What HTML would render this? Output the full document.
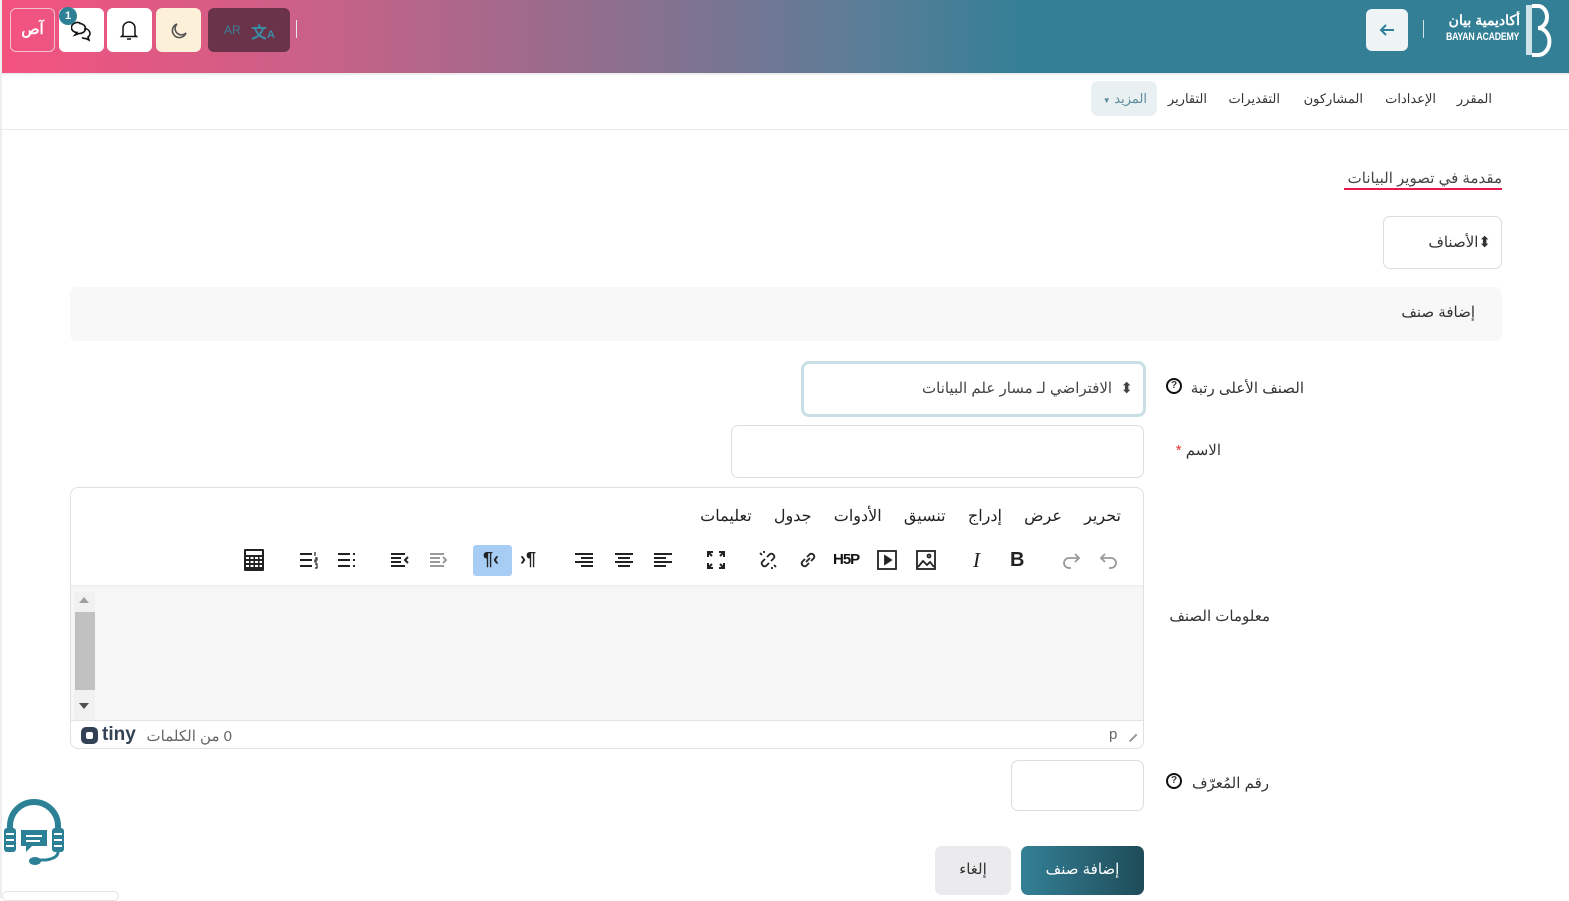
<!DOCTYPE html>
<html lang="ar"><head><meta charset="utf-8">
<style>
*{box-sizing:border-box;margin:0;padding:0}
body{width:1569px;height:898px;overflow:hidden;background:#fff;font-family:"Liberation Sans","Noto Sans CJK SC",sans-serif;color:#333;position:relative}
.a{position:absolute}
.t{position:absolute;white-space:nowrap;direction:rtl;font-size:14px;color:#333}
svg{display:block}
.ic{position:absolute;top:548px;width:24px;height:24px}
</style></head><body>
<div class="a" style="left:0;top:0;width:2px;height:898px;background:#eee"></div>
<div class="a" style="left:2px;top:0;width:1567px;height:73px;background:linear-gradient(90deg,#f4527f 0%,#c96187 20%,#9b6b8c 35%,#5b7d97 55%,#347f96 65%,#337f96 100%)"></div>
<div class="a" style="left:0;top:73px;width:1569px;height:3px;background:linear-gradient(#e6e6e6,#fff)"></div>
<div class="a" style="left:10px;top:8px;width:45px;height:44px;border:1.5px solid #f3c0d0;border-radius:6px;color:#fff;font-weight:bold;font-size:15px;text-align:center;line-height:41px">آص</div>
<div class="a" style="left:59px;top:8px;width:45px;height:44px;background:#fff;border-radius:6px"></div>
<svg class="a" style="left:71px;top:20px" width="22" height="22" viewBox="0 0 22 22" fill="none" stroke="#111" stroke-width="1.6"><path d="M9 3a6 5 0 1 0 -3 9.5l-2 2.5 4-1.5a6 5 0 0 0 1-10z"/><path d="M13 9a5 4.5 0 0 1 4 8l1 3-3-1.5a5 4.5 0 0 1 -4-1"/></svg>
<div class="a" style="left:59px;top:7px;width:18px;height:18px;border-radius:50%;background:#2d8197;color:#fff;font-size:11px;font-weight:bold;text-align:center;line-height:18px">1</div>
<div class="a" style="left:107px;top:8px;width:45px;height:44px;background:#fff;border-radius:6px"></div>
<svg class="a" style="left:119px;top:19px" width="20" height="22" viewBox="0 0 20 22" fill="none" stroke="#111" stroke-width="1.5"><path d="M4 16V9a6 6 0 0 1 12 0v7l1.5 1.5h-15z"/><path d="M8 20h4"/></svg>
<div class="a" style="left:156px;top:8px;width:45px;height:44px;background:#fdf0d8;border-radius:6px"></div>
<svg class="a" style="left:169px;top:21px" width="20" height="20" viewBox="0 0 20 20" fill="none" stroke="#555" stroke-width="1.6"><path d="M8 3a7 7 0 1 0 9 9 6 6 0 0 1 -9 -9z"/></svg>
<div class="a" style="left:208px;top:8px;width:82px;height:44px;background:#6b3349;border-radius:6px"></div>
<div class="a" style="left:224px;top:23px;color:#3a7f96;font-size:12px">AR</div>
<div class="a" style="left:251px;top:19px;color:#3a8da6;font-size:16px;font-weight:bold">文<span style="font-size:11px">A</span></div>
<div class="a" style="left:296px;top:20px;width:1px;height:18px;background:#e8e8e8"></div>
<div class="a" style="left:1366px;top:9px;width:42px;height:42px;background:#eef4f6;border-radius:6px"></div>
<svg class="a" style="left:1378px;top:21px" width="18" height="18" viewBox="0 0 18 18" fill="none" stroke="#2d7f97" stroke-width="2"><path d="M16 9H3M8 4L3 9l5 5"/></svg>
<div class="a" style="left:1423px;top:20px;width:1px;height:18px;background:#cfe0e6"></div>
<div class="t" style="right:49px;top:12px;color:#fff;font-size:14px;font-weight:bold">أكاديمية بيان</div>
<div class="a" style="left:1446px;top:31px;color:#fff;font-size:11px;font-weight:bold;letter-spacing:-0.3px;transform:scaleX(.8);transform-origin:left">BAYAN ACADEMY</div>
<svg class="a" style="left:1524px;top:3px" width="30" height="56" viewBox="0 0 30 56" fill="none"><rect x="2" y="2" width="6" height="50" fill="#cde3ea"/><path d="M8 3h6a9 11 0 0 1 0 22a11 13 0 0 1 0 27h-6" stroke="#fff" stroke-width="4"/></svg>
<div class="t" style="right:77px;top:91px;font-size:13px">المقرر</div>
<div class="t" style="right:133px;top:91px;font-size:13px">الإعدادات</div>
<div class="t" style="right:206px;top:91px;font-size:13px">المشاركون</div>
<div class="t" style="right:289px;top:91px;font-size:13px">التقديرات</div>
<div class="t" style="right:362px;top:91px;font-size:13px">التقارير</div>
<div class="a" style="left:1091px;top:81px;width:66px;height:35px;background:#e8f0f2;border-radius:7px"></div>
<div class="t" style="right:422px;top:91px;font-size:13px;color:#5a8a9a">المزيد <span style="font-size:8px">▼</span></div>
<div class="a" style="left:0;top:129px;width:1569px;height:1px;background:#eaeaea"></div>
<div class="t" style="right:67px;top:169px;font-size:15px;color:#444">مقدمة في تصوير البيانات</div>
<div class="a" style="left:1344px;top:188px;width:158px;height:2px;background:#e8174e"></div>
<div class="a" style="left:1383px;top:216px;width:119px;height:53px;border:1px solid #ddd;border-radius:7px"></div>
<div class="t" style="right:78px;top:233px;font-size:15px">⬍الأصناف</div>
<div class="a" style="left:70px;top:287px;width:1432px;height:54px;background:#f8f8f8;border-radius:7px"></div>
<div class="t" style="right:94px;top:303px;font-size:15px">إضافة صنف</div>
<div class="t" style="right:265px;top:379px;font-size:15px">الصنف الأعلى رتبة</div>
<div class="a" style="left:1166px;top:378px;width:16px;height:16px;border:2px solid #111;border-radius:50%;font-size:10px;text-align:center;line-height:12px;font-weight:bold">?</div>
<div class="a" style="left:801px;top:361px;width:345px;height:56px;border:3px solid #c8dfe6;border-radius:8px"></div>
<div class="t" style="right:436px;top:379px;font-size:15px;color:#444">⬍ &nbsp;الافتراضي لـ مسار علم البيانات</div>
<div class="t" style="right:348px;top:441px;font-size:15px">الاسم <span style="color:#e53935">*</span></div>
<div class="a" style="left:731px;top:425px;width:413px;height:53px;border:1px solid #ddd;border-radius:7px"></div>
<div class="t" style="right:299px;top:607px;font-size:15px">معلومات الصنف</div>
<div class="a" style="left:70px;top:487px;width:1074px;height:262px;border:1px solid #e0e0e0;border-radius:8px;overflow:hidden">
 <div class="a" style="left:0;top:100px;width:1074px;height:132px;background:#f7f7f7"></div>
 <div class="a" style="left:0;top:97px;width:1074px;height:4px;background:linear-gradient(#eee,#f7f7f7)"></div>
 <div class="a" style="left:3px;top:104px;width:21px;height:128px;background:#f1f1f1"></div>
 <div class="a" style="left:4px;top:124px;width:20px;height:78px;background:#c1c1c1"></div>
 <div class="a" style="left:8px;top:109px;width:0;height:0;border-left:5px solid transparent;border-right:5px solid transparent;border-bottom:6px solid #a0a0a0"></div>
 <div class="a" style="left:8px;top:215px;width:0;height:0;border-left:5px solid transparent;border-right:5px solid transparent;border-top:6px solid #505050"></div>
 <div class="a" style="left:0;top:232px;width:1074px;height:1px;background:#e3e3e3"></div>
</div>
<div class="t" style="right:448px;top:506px;font-size:16px;color:#222">تحرير&nbsp;&nbsp;&nbsp;&nbsp;&nbsp;عرض&nbsp;&nbsp;&nbsp;&nbsp;&nbsp;إدراج&nbsp;&nbsp;&nbsp;&nbsp;&nbsp;تنسيق&nbsp;&nbsp;&nbsp;&nbsp;&nbsp;الأدوات&nbsp;&nbsp;&nbsp;&nbsp;&nbsp;جدول&nbsp;&nbsp;&nbsp;&nbsp;&nbsp;تعليمات</div>
<svg class="ic" style="left:1097px" viewBox="0 0 24 24" fill="none" stroke="#999" stroke-width="1.8"><path d="M8 6L4 10l4 4M4 10h10a5 5 0 0 1 0 10h-2"/></svg>
<svg class="ic" style="left:1059px" viewBox="0 0 24 24" fill="none" stroke="#999" stroke-width="1.8"><path d="M16 6l4 4-4 4M20 10H10a5 5 0 0 0 0 10h2"/></svg>
<div class="a" style="left:1010px;top:549px;font-size:20px;font-weight:bold;color:#222">B</div>
<div class="a" style="left:973px;top:548px;font-size:21px;font-style:italic;font-family:'Liberation Serif',serif;color:#222">I</div>
<svg class="ic" style="left:914px" viewBox="0 0 24 24" fill="none" stroke="#222" stroke-width="1.8"><rect x="3" y="3" width="18" height="18"/><path d="M4 19l5-6 4 4 3-3 4 5"/><circle cx="15" cy="8" r="1.5"/></svg>
<svg class="ic" style="left:875px" viewBox="0 0 24 24" fill="none" stroke="#222" stroke-width="1.8"><rect x="3" y="3" width="18" height="18"/><path d="M10 8v8l6-4z" fill="#222"/></svg>
<div class="a" style="left:833px;top:551px;font-size:15px;font-weight:bold;color:#111;letter-spacing:-1px">H5P</div>
<svg class="ic" style="left:796px" viewBox="0 0 24 24" fill="none" stroke="#222" stroke-width="1.8"><path d="M10 14l4-4M9 11l-3 3a3 3 0 0 0 4 4l3-3M15 13l3-3a3 3 0 0 0 -4-4l-3 3"/></svg>
<svg class="ic" style="left:756px" viewBox="0 0 24 24" fill="none" stroke="#222" stroke-width="1.8"><path d="M9 11l-3 3a3 3 0 0 0 4 4l3-3M15 13l3-3a3 3 0 0 0 -4-4l-3 3M4 5l2 2M8 3v2M20 19l-2-2M16 21v-2"/></svg>
<svg class="ic" style="left:704px" viewBox="0 0 24 24" fill="none" stroke="#222" stroke-width="2"><path d="M4 9V4h5M15 4h5v5M20 15v5h-5M9 20H4v-5M4 4l4 4M20 4l-4 4M20 20l-4-4M4 20l4-4"/></svg>
<svg class="ic" style="left:651px" viewBox="0 0 24 24" stroke="#222" stroke-width="2"><path d="M3 6h18M3 10h12M3 14h18M3 18h12"/></svg>
<svg class="ic" style="left:612px" viewBox="0 0 24 24" stroke="#222" stroke-width="2"><path d="M3 6h18M6 10h12M3 14h18M6 18h12"/></svg>
<svg class="ic" style="left:572px" viewBox="0 0 24 24" stroke="#222" stroke-width="2"><path d="M3 6h18M9 10h12M3 14h18M9 18h12"/></svg>
<div class="a" style="left:520px;top:549px;font-size:18px;font-weight:bold;color:#222">›¶</div>
<div class="a" style="left:473px;top:545px;width:39px;height:31px;background:#a8cdf5;border-radius:3px"></div>
<div class="a" style="left:483px;top:549px;font-size:18px;font-weight:bold;color:#222">¶‹</div>
<svg class="ic" style="left:427px" viewBox="0 0 24 24" fill="none" stroke="#999" stroke-width="2"><path d="M3 6h14M3 10h10M3 14h10M3 18h14M16 9l3 3-3 3"/></svg>
<svg class="ic" style="left:388px" viewBox="0 0 24 24" fill="none" stroke="#222" stroke-width="2"><path d="M3 6h14M3 10h10M3 14h10M3 18h14M20 9l-3 3 3 3"/></svg>
<svg class="ic" style="left:335px" viewBox="0 0 24 24" stroke="#222" stroke-width="2"><path d="M3 6h12M3 12h12M3 18h12M18 6h2M18 12h2M18 18h2"/></svg>
<svg class="ic" style="left:297px" viewBox="0 0 24 24" stroke="#222" stroke-width="2"><path d="M3 6h12M3 12h12M3 18h12"/><path d="M18 4v4M18 10h2v2h-2v2h2M18 16h2v4h-2" stroke-width="1.2" fill="none"/></svg>
<svg class="ic" style="left:242px" viewBox="0 0 24 24"><rect x="2" y="1" width="20" height="22" rx="1" fill="#222"/><rect x="4" y="3" width="16" height="4" fill="#fff"/><g fill="#fff"><rect x="4" y="9" width="3" height="2"/><rect x="8.5" y="9" width="3" height="2"/><rect x="13" y="9" width="3" height="2"/><rect x="17.5" y="9" width="2.5" height="2"/><rect x="4" y="13" width="3" height="2"/><rect x="8.5" y="13" width="3" height="2"/><rect x="13" y="13" width="3" height="2"/><rect x="17.5" y="13" width="2.5" height="2"/><rect x="4" y="17" width="3" height="2"/><rect x="8.5" y="17" width="3" height="2"/><rect x="13" y="17" width="3" height="2"/><rect x="17.5" y="17" width="2.5" height="2"/></g></svg>
<div class="a" style="left:1109px;top:726px;font-size:15px;color:#666">p</div>
<div class="a" style="left:1128px;top:737px;width:10px;height:1.5px;background:#999;transform:rotate(-45deg)"></div>
<div class="t" style="right:1337px;top:727px;font-size:15px;color:#666">0 من الكلمات</div>
<div class="a" style="left:81px;top:727px;width:17px;height:17px;background:#334155;border-radius:5px"></div>
<div class="a" style="left:86px;top:732px;width:7px;height:7px;background:#fff;border-radius:2px"></div>
<div class="a" style="left:102px;top:724px;font-size:19px;font-weight:bold;color:#334155">tiny</div>
<div class="t" style="right:300px;top:774px;font-size:15px">رقم المُعرّف</div>
<div class="a" style="left:1166px;top:773px;width:16px;height:16px;border:2px solid #111;border-radius:50%;font-size:10px;text-align:center;line-height:12px;font-weight:bold">?</div>
<div class="a" style="left:1011px;top:760px;width:133px;height:51px;border:1px solid #ddd;border-radius:7px"></div>
<div class="a" style="left:1021px;top:846px;width:123px;height:49px;border-radius:7px;background:linear-gradient(90deg,#348096,#1f4c58);color:#fff;font-size:15px;text-align:center;line-height:48px;direction:rtl">إضافة صنف</div>
<div class="a" style="left:935px;top:846px;width:76px;height:49px;border-radius:7px;background:#ebebed;color:#333;font-size:15px;text-align:center;line-height:48px">إلغاء</div>
<svg class="a" style="left:2px;top:798px" width="64" height="70" viewBox="0 0 64 70" fill="none"><path d="M8 34V28a24 24 0 0 1 48 0v6" stroke="#2d8197" stroke-width="6"/><rect x="2" y="30" width="12" height="24" rx="3" fill="#2d8197"/><rect x="50" y="30" width="12" height="24" rx="3" fill="#2d8197"/><path d="M19 32h26v16H30l-6 6v-6h-5z" fill="#2d8197"/><g stroke="#fff" stroke-width="2"><path d="M24 38h16M24 43h14M4 36h8M4 42h8M4 48h8M52 36h8M52 42h8M52 48h8"/></g><path d="M56 54q0 6-12 8H38" stroke="#2d8197" stroke-width="3"/><ellipse cx="33" cy="63" rx="6" ry="4" fill="#2d8197"/></svg>
<div class="a" style="left:2px;top:891px;width:117px;height:10px;border:1px solid #e5e5e5;border-radius:6px;background:#fff"></div>
</body></html>
